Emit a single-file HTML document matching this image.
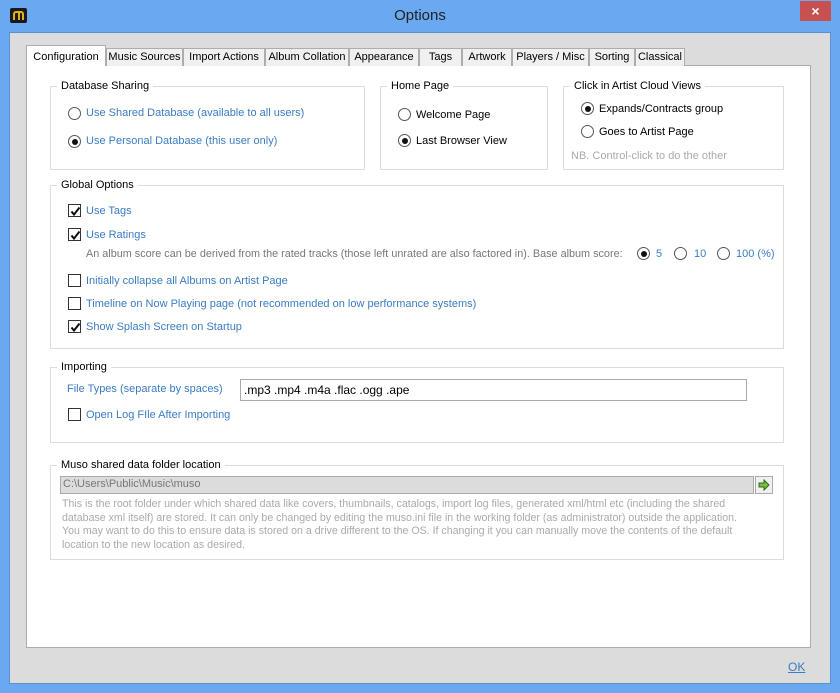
<!DOCTYPE html>
<html><head><meta charset="utf-8"><style>
*{box-sizing:border-box;margin:0;padding:0}
body{width:840px;height:693px;background:#6aa8f2;position:relative;overflow:hidden;font-family:"Liberation Sans","DejaVu Sans",sans-serif;font-size:11px;color:#000}
.a{position:absolute;white-space:nowrap}
.client{position:absolute;left:9px;top:32px;width:822px;height:652px;background:#dcdcdc;border:1px solid #5a8fd0}
.page{position:absolute;left:26px;top:65px;width:785px;height:583px;background:#fff;border:1px solid #adadad}
.tab{position:absolute;top:48px;height:18px;background:#f0f0f0;border:1px solid #adadad;border-bottom:none;font-size:11px;text-align:center;line-height:17px;white-space:nowrap;overflow:hidden}
.grp{position:absolute;border:1px solid #dcdcdc}
.lg{position:absolute;background:#fff;padding:0 4px;top:-8px;left:6px;font-size:11px;line-height:14px;white-space:nowrap}
.blue{color:#3a7cc4}
.rad{position:absolute;width:13px;height:13px;border:1px solid #555;border-radius:50%;background:#fff}
.rad.on::after{content:"";position:absolute;left:2.5px;top:2.5px;width:6px;height:6px;border-radius:50%;background:#111}
.cb{position:absolute;width:13px;height:13px;border:1px solid #333;background:#fff}
.cb svg{position:absolute;left:1px;top:1px}
.t{position:absolute;white-space:nowrap;line-height:14px;font-size:11px}
</style></head><body>
<div class="a" style="left:10px;top:8px;width:17px;height:15px;background:#1a1a1a;border-radius:2px"><div style="position:absolute;left:3px;top:3px;width:11px;height:9px;border:2px solid #e0b020;border-radius:3px 3px 0 0;border-bottom:none"></div><div style="position:absolute;left:7.5px;top:4px;width:2px;height:8px;background:#e0b020"></div></div>
<div class="a" style="left:0;width:840px;top:7px;text-align:center;font-size:15px;color:#222">Options</div>
<div class="a" style="left:800px;top:1px;width:31px;height:20px;background:#c75050;color:#fff;text-align:center;font-size:14px;line-height:20px;font-weight:bold">×</div>
<div class="client"></div>
<div class="page"></div>
<div class="tab" style="left:26px;top:45px;width:80px;height:21px;background:#fff;line-height:22px">Configuration</div>
<div class="tab" style="left:106px;width:77px">Music Sources</div>
<div class="tab" style="left:183px;width:82px">Import Actions</div>
<div class="tab" style="left:265px;width:84px">Album Collation</div>
<div class="tab" style="left:349px;width:70px">Appearance</div>
<div class="tab" style="left:419px;width:43px">Tags</div>
<div class="tab" style="left:462px;width:50px">Artwork</div>
<div class="tab" style="left:512px;width:77px">Players / Misc</div>
<div class="tab" style="left:589px;width:46px">Sorting</div>
<div class="tab" style="left:635px;width:50px">Classical</div>

<div class="grp" style="left:50px;top:86px;width:315px;height:84px"><div class="lg">Database Sharing</div></div>
<div class="rad" style="left:68px;top:107px"></div><div class="t blue" style="left:86px;top:106px">Use Shared Database (available to all users)</div>
<div class="rad on" style="left:68px;top:135px"></div><div class="t blue" style="left:86px;top:134px">Use Personal Database (this user only)</div>

<div class="grp" style="left:380px;top:86px;width:168px;height:84px"><div class="lg">Home Page</div></div>
<div class="rad" style="left:398px;top:108px"></div><div class="t" style="left:416px;top:108px">Welcome Page</div>
<div class="rad on" style="left:398px;top:134px"></div><div class="t" style="left:416px;top:134px">Last Browser View</div>

<div class="grp" style="left:563px;top:86px;width:221px;height:84px"><div class="lg">Click in Artist Cloud Views</div></div>
<div class="rad on" style="left:581px;top:102px"></div><div class="t" style="left:599px;top:102px">Expands/Contracts group</div>
<div class="rad" style="left:581px;top:125px"></div><div class="t" style="left:599px;top:125px">Goes to Artist Page</div>
<div class="t" style="left:571px;top:149px;color:#aaa">NB. Control-click to do the other</div>

<div class="grp" style="left:50px;top:185px;width:734px;height:164px"><div class="lg">Global Options</div></div>
<div class="cb" style="left:68px;top:204px"><svg width="11" height="11"><path d="M1.5 5.5 L4 8.5 L9.5 1.5" stroke="#111" stroke-width="2" fill="none"/></svg></div><div class="t blue" style="left:86px;top:204px">Use Tags</div>
<div class="cb" style="left:68px;top:228px"><svg width="11" height="11"><path d="M1.5 5.5 L4 8.5 L9.5 1.5" stroke="#111" stroke-width="2" fill="none"/></svg></div><div class="t blue" style="left:86px;top:228px">Use Ratings</div>
<div class="t" style="left:86px;top:247px;color:#777;transform:scaleX(0.985);transform-origin:left">An album score can be derived from the rated tracks (those left unrated are also factored in). Base album score:</div>
<div class="rad on" style="left:637px;top:247px"></div><div class="t blue" style="left:656px;top:247px">5</div>
<div class="rad" style="left:674px;top:247px"></div><div class="t blue" style="left:694px;top:247px">10</div>
<div class="rad" style="left:717px;top:247px"></div><div class="t blue" style="left:736px;top:247px">100 (%)</div>
<div class="cb" style="left:68px;top:274px"></div><div class="t blue" style="left:86px;top:274px">Initially collapse all Albums on Artist Page</div>
<div class="cb" style="left:68px;top:297px"></div><div class="t blue" style="left:86px;top:297px">Timeline on Now Playing page (not recommended on low performance systems)</div>
<div class="cb" style="left:68px;top:320px"><svg width="11" height="11"><path d="M1.5 5.5 L4 8.5 L9.5 1.5" stroke="#111" stroke-width="2" fill="none"/></svg></div><div class="t blue" style="left:86px;top:320px">Show Splash Screen on Startup</div>

<div class="grp" style="left:50px;top:367px;width:734px;height:76px"><div class="lg">Importing</div></div>
<div class="t blue" style="left:67px;top:382px">File Types (separate by spaces)</div>
<div class="a" style="left:240px;top:379px;width:507px;height:22px;border:1px solid #aaa;background:#fff;font-size:12px;padding:3px 3px;line-height:14px">.mp3 .mp4 .m4a .flac .ogg .ape</div>
<div class="cb" style="left:68px;top:408px"></div><div class="t blue" style="left:86px;top:408px">Open Log FIle After Importing</div>

<div class="grp" style="left:50px;top:465px;width:734px;height:95px"><div class="lg">Muso shared data folder location</div></div>
<div class="a" style="left:60px;top:476px;width:694px;height:18px;background:#dcdcdc;border:1px solid #aaa;color:#777;font-size:11px;line-height:15px;padding-left:2px">C:\Users\Public\Music\muso</div>
<div class="a" style="left:755px;top:476px;width:18px;height:18px;border:1px solid #aaa;background:#f0f0f0"><svg width="16" height="16"><path d="M3 6 H8 V3 L13 8 L8 13 V10 H3 Z" fill="#7ac040" stroke="#2b6a10" stroke-width="1"/></svg></div>
<div class="t" style="left:62px;top:498px;color:#aaa;line-height:13.5px;transform:scaleX(0.965);transform-origin:left">This is the root folder under which shared data like covers, thumbnails, catalogs, import log files, generated xml/html etc (including the shared<br>database xml itself) are stored. It can only be changed by editing the muso.ini file in the working folder (as administrator) outside the application.<br>You may want to do this to ensure data is stored on a drive different to the OS. If changing it you can manually move the contents of the default<br>location to the new location as desired.</div>

<div class="t blue" style="left:788px;top:660px;font-size:12px;text-decoration:underline;color:#3a7cc4">OK</div>
</body></html>
